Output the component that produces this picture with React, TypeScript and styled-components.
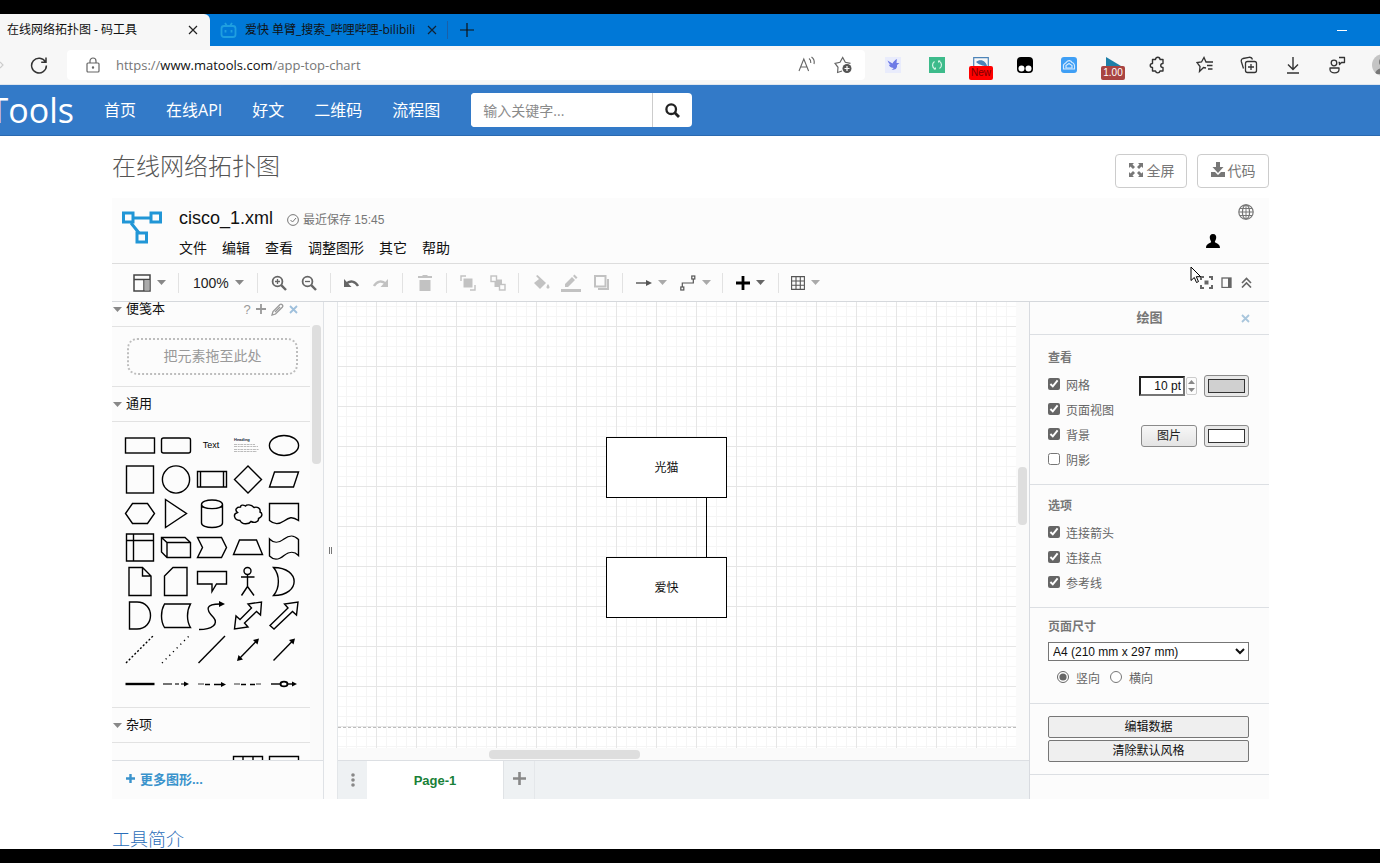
import React from "react";
import styled, { createGlobalStyle, css } from "styled-components";

const ui = `"Open Sans", "Noto Sans CJK SC", sans-serif`;
const arial = `"Liberation Sans", "Noto Sans CJK SC", sans-serif`;

const GlobalStyle = createGlobalStyle`
  *, *::before, *::after { box-sizing: border-box; }
  body { margin: 0; background: #000; font-family: ${ui}; color: #333; }
  button, input, select { font-family: inherit; margin: 0; }
  svg { display: block; flex: none; }
`;

const Screen = styled.div`
  display: flex;
  flex-direction: column;
  height: 100vh;
  padding: 14px 0;
  overflow: hidden;
  background: #000;
`;

/* ---------- browser chrome ---------- */

const TabStrip = styled.div`
  display: flex;
  align-items: center;
  flex: none;
  height: 32px;
  background: #0078d7;
  color: #111;
`;

const BrowserTab = styled.div<{ $active?: boolean }>`
  display: flex;
  align-items: center;
  gap: ${(p) => (p.$active ? "10px" : "8px")};
  height: 32px;
  padding: ${(p) => (p.$active ? "0 8px 0 7px" : "0 6px 0 10px")};
  width: ${(p) => (p.$active ? "210px" : "237px")};
  background: ${(p) => (p.$active ? "#f7f7f7" : "transparent")};
  border-radius: 0 6px 0 0;
`;

const TabTitle = styled.span`
  flex: 1;
  font-size: 12px;
  line-height: 18px;
  white-space: nowrap;
`;

const PlainButton = styled.button<{ $w?: number }>`
  display: flex;
  align-items: center;
  justify-content: center;
  flex: none;
  width: ${(p) => (p.$w ? `${p.$w}px` : "auto")};
  padding: 0;
  border: 0;
  background: none;
  color: inherit;
`;

const NewTab = styled(PlainButton)`
  height: 18px;
  border-left: 1px solid #1a5fa8;
`;

const Minimize = styled(PlainButton)`
  margin-left: auto;
  margin-right: 30px;
  color: #fff;
`;

const AddressRow = styled.div`
  display: flex;
  align-items: center;
  flex: none;
  height: 39px;
  background: #f7f7f7;
  border-bottom: 1px solid #dfe6ee;
  overflow: hidden;
  color: #333;
`;

const AddressBox = styled.div`
  display: flex;
  align-items: center;
  flex: 1;
  height: 30px;
  padding: 0 13px 0 19px;
  background: #fff;
  border-radius: 4px;
`;

const Url = styled.span`
  flex: 1;
  margin-left: 16px;
  font-size: 13px;
  line-height: 20px;
  color: #767676;
  b { font-weight: 400; color: #111; }
`;

const AddressActions = styled.div`
  display: flex;
  gap: 18px;
`;

const Extensions = styled.div`
  display: flex;
  align-items: center;
  flex: none;
  width: 515px;
  padding-left: 6px;
`;

const ExtensionSlot = styled(PlainButton)`
  position: relative;
  width: 44px;
  height: 30px;
`;

const ExtBadge = styled.span<{ $bg: string; $fg: string }>`
  position: absolute;
  left: 10px;
  top: 16px;
  width: 24px;
  height: 14px;
  border-radius: 2px;
  background: ${(p) => p.$bg};
  color: ${(p) => p.$fg};
  font: 10px/14px ${arial};
  text-align: center;
`;

const ExtDivider = styled.span`
  width: 1px;
  height: 18px;
  margin: 0 2px;
  background: #b5b5b5;
`;

const Avatar = styled(PlainButton)`
  width: 22px;
  height: 22px;
  margin-left: 13px;
  border-radius: 50%;
  background: #c4c4c4;
  overflow: hidden;
`;

/* ---------- site navigation ---------- */

const SiteNav = styled.nav`
  display: flex;
  align-items: center;
  flex: none;
  height: 51px;
  background: #337ac8;
  border-bottom: 1px solid #2a69b0;
`;

const Brand = styled.a`
  display: flex;
  justify-content: flex-end;
  width: 74px;
  overflow: hidden;
  font-size: 34px;
  line-height: 46px;
  color: #fff;
  text-decoration: none;
`;

const NavLinks = styled.div`
  display: flex;
  gap: 30px;
  margin: 0 31px 0 30px;
`;

const NavLink = styled.a`
  font-size: 16px;
  line-height: 24px;
  color: #fff;
  text-decoration: none;
  white-space: nowrap;
`;

const SearchForm = styled.form`
  display: flex;
  width: 221px;
  height: 34px;
  border-radius: 4px;
  background: #fff;
  overflow: hidden;
`;

const SearchInput = styled.input`
  flex: 1;
  min-width: 0;
  padding: 0 12px;
  border: 0;
  background: #fff;
  font-size: 14px;
  &::placeholder { color: #8a8a8a; }
`;

const SearchButton = styled(PlainButton)`
  width: 40px;
  border-left: 1px solid #ccc;
  color: #222;
`;

/* ---------- page ---------- */

const Page = styled.main`
  display: flex;
  flex-direction: column;
  flex: 1;
  min-height: 0;
  padding: 0 111px 0 112px;
  background: #fff;
  overflow: hidden;
`;

const PageHead = styled.header`
  display: flex;
  align-items: flex-start;
  gap: 10px;
  flex: none;
  height: 62px;
`;

const PageTitle = styled.h1`
  flex: 1;
  margin: 12px 0 0;
  font-size: 24px;
  line-height: 36px;
  font-weight: 300;
  color: #555;
`;

const OutlineButton = styled.button`
  display: flex;
  align-items: center;
  justify-content: center;
  gap: 3px;
  width: 72px;
  height: 34px;
  margin-top: 18px;
  padding: 0 0 2px;
  border: 1px solid #ccc;
  border-radius: 4px;
  background: #fff;
  color: #777;
  font-size: 14px;
`;

const Intro = styled.h2`
  flex: none;
  height: 50px;
  margin: 0;
  padding-top: 27px;
  font-size: 18px;
  line-height: 26px;
  font-weight: 300;
  color: #2a6db8;
`;

/* ---------- editor shell ---------- */

const Editor = styled.section`
  display: flex;
  flex-direction: column;
  flex: 1;
  min-height: 0;
  background: #fcfcfc;
  font-family: ${arial};
  color: #111;
`;

const EditorHead = styled.div`
  display: flex;
  flex: none;
  height: 65px;
  padding: 0 15px 0 10px;
`;

const LogoSlot = styled.div`
  width: 57px;
  padding-top: 12px;
`;

const FileInfo = styled.div`
  display: flex;
  flex-direction: column;
  flex: 1;
  padding-top: 9px;
  gap: 9px;
`;

const FileLine = styled.div`
  display: flex;
  align-items: center;
  gap: 14px;
`;

const FileName = styled.span`
  font-size: 18px;
  line-height: 22px;
`;

const SavedNote = styled.span`
  display: flex;
  align-items: center;
  gap: 4px;
  padding-top: 4px;
  font-size: 12px;
  line-height: 18px;
  color: #777;
`;

const MenuBar = styled.div`
  display: flex;
  gap: 15px;
`;

const MenuItem = styled(PlainButton)`
  font-size: 14px;
  line-height: 20px;
`;

const HeadCorner = styled.div`
  display: flex;
  flex-direction: column;
  align-items: flex-end;
  gap: 14px;
  padding-top: 6px;
`;

const UserButton = styled(PlainButton)`
  margin-right: 34px;
`;

const ToolRow = styled.div`
  display: flex;
  align-items: center;
  flex: none;
  height: 39px;
  border-top: 1px solid #ddd;
  border-bottom: 1px solid #d5d8dc;
  color: #666;
`;

const ToolGroup = styled.div<{ $w: number; $pad: number; $gap?: number; $last?: boolean }>`
  display: flex;
  align-items: center;
  gap: ${(p) => p.$gap ?? 0}px;
  width: ${(p) => p.$w}px;
  height: 20px;
  padding-left: ${(p) => p.$pad}px;
  border-right: ${(p) => (p.$last ? "0" : "1px solid #e2e2e2")};
`;

const ToolButton = styled(PlainButton)<{ $off?: boolean }>`
  width: 30px;
  height: 24px;
  color: ${(p) => (p.$off ? "#c2c2c2" : "#666")};
`;

const DropButton = styled(PlainButton)`
  gap: 6px;
  height: 24px;
  font-size: 14px;
  color: #555;
`;

const ZoomText = styled.span`
  color: #222;
`;

const RightTools = styled.div`
  position: relative;
  display: flex;
  margin-left: auto;
  padding-right: 13px;
`;

const Pointer = styled.svg`
  position: absolute;
  left: -6px;
  top: -10px;
`;

const Workspace = styled.div`
  display: flex;
  flex: 1;
  min-height: 0;
`;

/* ---------- shape palette ---------- */

const Sidebar = styled.aside`
  display: flex;
  flex-direction: column;
  flex: none;
  width: 212px;
  border-right: 1px solid #dfe2e6;
`;

const PaletteArea = styled.div`
  display: flex;
  flex: 1;
  min-height: 0;
  overflow: hidden;
`;

const PaletteList = styled.div`
  width: 198px;
  margin-top: -10px;
`;

const PaletteTitle = styled.div`
  display: flex;
  align-items: center;
  gap: 4px;
  height: 35px;
  padding: 0 11px 0 1px;
  border-bottom: 1px solid #e2e2e2;
  font-size: 13px;
  line-height: 20px;
`;

const PaletteActions = styled.div`
  display: flex;
  gap: 3px;
  margin-left: auto;
  color: #999;
`;

const Help = styled(PlainButton)`
  font-size: 13px;
  width: 10px;
`;

const DropZoneWrap = styled.div`
  padding: 11px 12px 11px 15px;
  border-bottom: 1px solid #e2e2e2;
`;

const DropZone = styled.div`
  height: 37px;
  border: 2px dotted #bdbdbd;
  border-radius: 10px;
  text-align: center;
  font-size: 14px;
  line-height: 33px;
  color: #999;
`;

const ShapeGrid = styled.div`
  display: grid;
  grid-template-columns: repeat(5, 36px);
  grid-auto-rows: 34px;
  padding: 6px 0 7px 10px;
  border-bottom: 1px solid #e2e2e2;
`;

const ScrollRail = styled.div<{ $side?: "v" | "h" }>`
  flex: none;
  background: #fafafa;
  ${(p) =>
    p.$side === "h"
      ? css`height: 12px; padding: 2px 0 1px 151px;`
      : css`width: 13px; padding: 0 2px;`}
`;

const Thumb = styled.div<{ $top?: string; $w?: string; $h?: string }>`
  width: ${(p) => p.$w ?? "9px"};
  height: ${(p) => p.$h ?? "9px"};
  margin-top: ${(p) => p.$top ?? "0"};
  border-radius: 4px;
  background: #dedede;
`;

const MoreShapes = styled(PlainButton)`
  justify-content: flex-start;
  gap: 5px;
  height: 39px;
  padding: 0 0 3px 14px;
  border-top: 1px solid #dcdfe3;
  font-size: 13px;
  font-weight: 700;
  color: #3a93cc;
`;

const Splitter = styled.div`
  display: flex;
  align-items: center;
  justify-content: center;
  flex: none;
  width: 14px;
  border-right: 1px solid #e3e6e9;
`;

const Grip = styled.div`
  width: 3px;
  height: 7px;
  border: solid #777;
  border-width: 0 1px;
`;

/* ---------- canvas ---------- */

const Center = styled.div`
  display: flex;
  flex-direction: column;
  flex: 1;
  min-width: 0;
`;

const CanvasRow = styled.div`
  display: flex;
  flex: 1;
  min-height: 0;
`;

const Canvas = styled.div`
  position: relative;
  flex: 1;
  overflow: hidden;
  background-color: #fff;
  background-image:
    linear-gradient(to right, #e6e6e6 1px, transparent 1px),
    linear-gradient(to bottom, #e6e6e6 1px, transparent 1px),
    linear-gradient(to right, #f5f5f5 1px, transparent 1px),
    linear-gradient(to bottom, #f5f5f5 1px, transparent 1px);
  background-size: 40px 40px, 40px 40px, 10px 10px, 10px 10px;
  background-position: 38px 24px, 38px 24px, 8px 4px, 8px 4px;
`;

const Node = styled.div<{ $x: number; $y: number }>`
  position: absolute;
  left: ${(p) => p.$x}px;
  top: ${(p) => p.$y}px;
  width: 121px;
  height: 61px;
  border: 1px solid #000;
  background: #fff;
  text-align: center;
  font-size: 12px;
  line-height: 60px;
`;

const Edge = styled.div`
  position: absolute;
  left: 368px;
  top: 195px;
  width: 1px;
  height: 61px;
  background: #000;
`;

const PageBreak = styled.div`
  position: absolute;
  left: 0;
  right: 0;
  top: 425px;
  border-top: 1px dashed #bdbdbd;
`;

const PageTabs = styled.div`
  display: flex;
  flex: none;
  height: 39px;
  border-top: 1px solid #dcdfe3;
  background: #eef1f3;
  color: #888;
`;

const PageTab = styled.button`
  width: 137px;
  padding: 0;
  border: 0;
  border-right: 1px solid #e0e3e6;
  background: #fff;
  font-size: 13px;
  font-weight: 700;
  color: #188038;
`;

const AddPage = styled(PlainButton)`
  padding-bottom: 4px;
  border-right: 1px solid #e4e7ea;
`;

/* ---------- format panel ---------- */

const Panel = styled.aside`
  flex: none;
  width: 240px;
  border-left: 1px solid #d8dbe0;
  font-size: 12px;
  color: #666;
`;

const PanelTitle = styled.div`
  display: flex;
  align-items: center;
  height: 33px;
  padding: 0 18px 0 30px;
  border-bottom: 1px solid #dcdfe3;
  font-size: 13px;
  line-height: 18px;
  font-weight: 700;
  color: #777;
  span { flex: 1; text-align: center; }
`;

const PanelSection = styled.section<{ $top: number; $bottom: number }>`
  padding: ${(p) => p.$top}px 20px ${(p) => p.$bottom}px 18px;
  border-bottom: 1px solid #dcdfe3;
`;

const PanelHeading = styled.h3`
  margin: 0 0 4px;
  font-size: 12px;
  line-height: 22px;
  font-weight: 700;
  color: #777;
`;

const OptionRow = styled.div`
  display: flex;
  align-items: center;
  height: 25px;
`;

const Option = styled.label`
  display: flex;
  align-items: center;
  gap: 6px;
  flex: 1;
  line-height: 18px;
  input {
    width: 12px;
    height: 12px;
    margin: 0 0 4px;
    accent-color: #666;
  }
`;

const SizeInput = styled.input`
  width: 46px;
  height: 20px;
  padding: 0 2px;
  border: 2px inset #767676;
  font-size: 12px;
  text-align: right;
  color: #111;
`;

const Stepper = styled.div`
  display: flex;
  flex-direction: column;
  width: 11px;
  height: 18px;
  margin: 0 7px 0 1px;
  border: 1px solid #ccc;
  border-radius: 2px;
  button { flex: 1; width: 9px; }
  color: #888;
`;

const SwatchButton = styled.button<{ $color: string }>`
  width: 45px;
  height: 22px;
  padding: 3px;
  border: 1px solid #8a8a8a;
  border-radius: 3px;
  background: #e8e8e8;
  &::before {
    content: "";
    display: block;
    height: 14px;
    border: 1px solid #333;
    background: ${(p) => p.$color};
  }
`;

const ImageButton = styled.button`
  width: 56px;
  height: 22px;
  margin-right: 7px;
  padding: 0;
  border: 1px solid #8a8a8a;
  border-radius: 3px;
  background: linear-gradient(#f7f7f7, #e4e4e4);
  font-size: 12px;
  line-height: 18px;
  color: #222;
`;

const PaperSelect = styled.select`
  display: block;
  width: 100%;
  height: 19px;
  padding: 0;
  border: 1px solid #767676;
  border-radius: 0;
  background: #fff;
  font-size: 12px;
  color: #111;
`;

const RadioRow = styled.div`
  display: flex;
  align-items: center;
  gap: 10px;
  height: 25px;
  margin-top: 5px;
  padding-left: 9px;
  label { flex: none; gap: 7px; }
`;

const WideButton = styled.button`
  display: block;
  width: 100%;
  height: 22px;
  padding: 0;
  border: 1px solid #767676;
  border-radius: 2px;
  background: #efefef;
  font-size: 12px;
  line-height: 20px;
  color: #111;
  & + & { margin-top: 2px; }
`;

/* ---------- icons ---------- */

type SvgProps = React.SVGProps<SVGSVGElement>;

const Line = ({ w = 16, h, children, ...rest }: SvgProps & { w?: number; h?: number }) => (
  <svg width={w} height={h ?? w} viewBox={`0 0 ${w} ${h ?? w}`} fill="none" stroke="currentColor" strokeWidth="1.2" {...rest}>
    {children}
  </svg>
);

const Cross = ({ w = 10, color = "currentColor", sw = 1.2 }: { w?: number; color?: string; sw?: number }) => (
  <Line w={w} stroke={color} strokeWidth={sw}><path d={`M1 1L${w - 1} ${w - 1}M${w - 1} 1L1 ${w - 1}`} /></Line>
);

const PlusIcon = ({ w = 14, sw = 2 }: { w?: number; sw?: number }) => (
  <Line w={w} strokeWidth={sw}><path d={`M${w / 2} 0V${w}M0 ${w / 2}H${w}`} /></Line>
);

const Caret = ({ color = "#888" }: { color?: string }) => (
  <svg width="9" height="5" viewBox="0 0 9 5"><path d="M0 0H9L4.5 5Z" fill={color} /></svg>
);

const Magnifier = ({ plus }: { plus?: boolean }) => (
  <Line w={16} strokeWidth="1.8">
    <circle cx="6.5" cy="6.5" r="4.9" />
    <path d="M10.2 10.2L15 15" strokeWidth="2.4" />
    <path d={plus ? "M4 6.5H9M6.5 4V9" : "M4 6.5H9"} strokeWidth="1.3" />
  </Line>
);

const Globe = () => (
  <Line w={16} stroke="#777" strokeWidth="1.2">
    <circle cx="8" cy="8" r="7.2" />
    <ellipse cx="8" cy="8" rx="3.6" ry="7.2" />
    <path d="M8 1V15M1 8H15M2 4.5H14M2 11.5H14" strokeWidth="1" />
  </Line>
);

/* Palette drawings, each in a 36 by 34 cell. */
const shapes: React.ReactNode[] = [
  <rect x="3.5" y="10" width="29" height="15" />,
  <rect x="3.5" y="10" width="29" height="15" rx="2" />,
  <text x="17" y="20" fontSize="9" textAnchor="middle" fill="#000" stroke="none">Text</text>,
  <>
    <text x="4" y="13" fontSize="4" fontWeight="700" fill="#123" stroke="none">Heading</text>
    <path d="M4 16.5H25M4 18.5H28M4 21.5H29M4 23.5H27" stroke="#bbb" strokeWidth="1" strokeDasharray="3 .7 2 .6" />
  </>,
  <ellipse cx="18" cy="17.5" rx="14.6" ry="10" />,

  <rect x="4.5" y="4" width="27" height="27" />,
  <circle cx="18" cy="17.5" r="13.6" />,
  <path d="M3.5 9.5H32.5V25H3.5ZM6.5 9.5V25M29.5 9.5V25" />,
  <path d="M18 4L31.5 17.5L18 31L4.5 17.5Z" />,
  <path d="M8.5 10H32.5L27.5 25H3.5Z" />,

  <path d="M10.5 7.5H25.5L32.5 17.5L25.5 27.5H10.5L3.5 17.5Z" />,
  <path d="M7.5 3.5L28.5 17.5L7.5 31.5Z" />,
  <path d="M7.5 8.5V27C7.5 33 28.5 33 28.5 27V8.5M7.5 8.5C7.5 2.5 28.5 2.5 28.5 8.5C28.5 14 7.5 14 7.5 8.5" />,
  <path d="M10.500 11C6 11 4.500 14 7.500 16.500C2.500 18 4 24 10 24.500C12 29 19 28.500 21 25.500C25 27.500 29 25.500 28.500 22.500C33 20.500 32.500 17 30 16C31 12 27 10.500 24 11.500C21 8 16.500 8.500 15.500 10C13 8.500 10.500 9 10.500 11Z" />,
  <path d="M3.5 7.5H32.5V24.5C26 20 23 21.5 18 25C13 28.5 8 28.5 3.5 24.5Z" />,

  <path d="M4.5 4H31.5V31H4.5ZM11.5 4V31M4.5 10.5H31.5" />,
  <path d="M3.5 7.5H27L32.5 12.5V27.5H9L3.5 22ZM3.5 7.5L9 12.5H32.5M9 12.5V27.5" />,
  <path d="M3.5 7.5H27.5L32.5 17.5L27.5 27.5H3.5L8.5 17.5Z" />,
  <path d="M9.5 10H26.5L32.5 24.5H3.5Z" />,
  <path d="M3.5 9C8 13.500 12 13.500 18 9C24 4.500 28 5 32.5 9.500V25.500C28 21 24 21 18 25.500C12 30.500 8 30.500 3.5 26Z" />,

  <path d="M7 3.5H20.5L29 12V31.5H7ZM20.5 3.5V12H29" />,
  <path d="M15 3.5H29V31.5H6.5V12Z" />,
  <path d="M3.5 7.5H32.5V20H22.5L18 27.5V20H3.5Z" />,
  <path d="M17.5 10.5V22.5M11 13H24.5M17.5 22.5L11.5 31.5M17.5 22.5L24 31.5M21 7A3.5 3.5 0 1 1 14 7A3.5 3.5 0 1 1 21 7" />,
  <path d="M7.5 3.5C35 3.5 35 31.500 7.5 31.500C14 24 14 11 7.500 3.500Z" />,

  <path d="M7.5 4H15C33 4 33 31 15 31H7.5Z" />,
  <path d="M6.5 6H32.5C28.5 13 28.5 23 32.5 29.5H6.5C2.5 23 2.5 13 6.5 6Z" />,
  <>
    <path d="M5 31.5C18 31.5 25 26 19.5 19.5C11 11 12 6 26 6" />
    <path d="M25 3L31 6L25 9Z" fill="#000" stroke="none" />
  </>,
  <path d="M31.5 4L30.5 17L26.5 13.5L14.5 25L18 29L4.5 31L6 18L10 21.5L21.5 10L18 6Z" />,
  <path d="M32 4L30.5 17L26.5 13.5L8 31L4 27.5L22 10L18.5 6Z" />,

  <path d="M4 31L31 4" strokeDasharray="2 2" />,
  <path d="M4 31L31 4" strokeDasharray="1.2 4" />,
  <path d="M4.5 31L31 4" />,
  <>
    <path d="M9 27L27 8.5" />
    <path d="M7 29L8.5 23L13 27.5ZM29 6.5L27.5 12.5L23 8Z" fill="#000" stroke="none" />
  </>,
  <>
    <path d="M7.5 28.5L27 8.5" />
    <path d="M29 6.5L27.5 12.5L23 8Z" fill="#000" stroke="none" />
  </>,

  <path d="M3.5 18H32.5" strokeWidth="2.4" />,
  <>
    <path d="M5 18H28" strokeDasharray="9 3 4 2" stroke="#444" />
    <path d="M26 15.5L31 18L26 20.5Z" fill="#000" stroke="none" />
  </>,
  <>
    <path d="M4 18H10" stroke="#999" strokeWidth="2" />
    <path d="M11 18.5H28" strokeDasharray="5 4 8 2" />
    <path d="M27 16L32 18.5L27 21Z" fill="#000" stroke="none" />
  </>,
  <>
    <path d="M4 18H10M26 18H31" stroke="#999" strokeWidth="2" />
    <path d="M11 18.5H25" strokeDasharray="5 4 8 2" />
  </>,
  <>
    <path d="M5 18H28" />
    <ellipse cx="18" cy="18" rx="3.5" ry="2.4" strokeWidth="1.8" fill="#fcfcfc" />
    <path d="M26 15.5L31 18L26 20.5Z" fill="#000" stroke="none" />
  </>,
];

const tableShapes: React.ReactNode[] = [
  null,
  null,
  null,
  <path d="M3.5 28V7.5H32.5V28M13 7.5V28M23 7.5V28M3.5 14H32.5" />,
  <path d="M3.5 28V7.5H32.5V28M3.5 14H32.5" />,
];

const Shape = ({ children }: { children: React.ReactNode }) => (
  <svg width="36" height="34" viewBox="0 0 36 34" fill="none" stroke="#000" strokeWidth="1.4">{children}</svg>
);

/* ---------- sections ---------- */

const BrowserChrome = () => (
  <>
    <TabStrip>
      <BrowserTab $active>
        <TabTitle>在线网络拓扑图 - 码工具</TabTitle>
        <PlainButton $w={18} aria-label="关闭标签页"><Cross w={10} color="#222" /></PlainButton>
      </BrowserTab>
      <BrowserTab>
        <Line w={17} stroke="#1f9fe0" strokeWidth="1.8">
          <rect x="1.5" y="4" width="14" height="11" rx="2.5" />
          <path d="M5 1L7 4M12 1L10 4M5.5 8V10.5M11.5 8V10.5" />
        </Line>
        <TabTitle>爱快 单臂_搜索_哔哩哔哩-bilibili</TabTitle>
        <PlainButton $w={18} aria-label="关闭标签页"><Cross w={10} color="#123" /></PlainButton>
      </BrowserTab>
      <NewTab $w={38} aria-label="新建标签页"><PlusIcon w={14} sw={1.2} /></NewTab>
      <Minimize $w={16} aria-label="最小化"><Line w={10} h={1} strokeWidth="1"><path d="M0 .5H10" /></Line></Minimize>
    </TabStrip>
    <AddressRow>
      <PlainButton $w={10} aria-label="前进">
        <Line w={10} h={12} stroke="#ccc"><path d="M0 3L3 6L0 9" /></Line>
      </PlainButton>
      <PlainButton $w={57} aria-label="刷新">
        <Line w={18} strokeWidth="1.5"><path d="M15.5 6A7.4 7.4 0 1 0 16.4 9.5M16 1.5V6.2H11.2" /></Line>
      </PlainButton>
      <AddressBox>
        <Line w={14} h={16} stroke="#666">
          <rect x="1" y="6" width="12" height="9" rx="1" />
          <path d="M4 6V4A3 3 0 0 1 10 4V6" />
          <circle cx="7" cy="10.5" r=".6" />
        </Line>
        <Url>https://<b>www.matools.com</b>/app-top-chart</Url>
        <AddressActions>
          <PlainButton $w={18} aria-label="朗读">
            <Line w={18} stroke="#666"><path d="M1 15L5.8 3L10.6 15M2.8 11H8.9M11 2.5C12.5 3.5 13 5 12.8 7M13.5 1C16 2.8 16.6 5.5 16 8" strokeWidth="1.1" /></Line>
          </PlainButton>
          <PlainButton $w={18} aria-label="收藏">
            <Line w={18} stroke="#666">
              <path d="M8 15L3.6 16.5L4 11.3L1 7.3L6 6.3L8.7 1.5L11.3 6.3L16.5 7.3" />
              <circle cx="13" cy="12.5" r="4.5" fill="#555" stroke="none" />
              <path d="M10.5 12.5H15.5M13 10V15" stroke="#fff" />
            </Line>
          </PlainButton>
        </AddressActions>
      </AddressBox>
      <Extensions>
        <ExtensionSlot aria-label="翻译">
          <Line w={16} stroke="none">
            <rect width="16" height="16" fill="#e9ecfc" />
            <path d="M2.5 3.5L7.5 6.500C8.500 4.500 10 3 12 2C11.500 4 11.800 5 11.500 6L14.500 6L12 8C12.500 11 10.500 13.500 6.500 12.500C8 12 8.500 11.500 8.500 11C5.500 10.500 4 9 3.800 7.500L5.500 8C4 6.500 3 5 2.500 3.500Z" fill="#6d7ae6" />
          </Line>
        </ExtensionSlot>
        <ExtensionSlot aria-label="同步">
          <Line w={16} stroke="none">
            <rect width="16" height="16" fill="#3dbb8b" />
            <path d="M5.5 4.5A4.3 4.3 0 0 0 6 12M10.5 11.5A4.3 4.3 0 0 0 10 4" stroke="#d6f5e6" strokeWidth="1.2" />
            <path d="M4.5 12.5H7V10ZM11.500 3.500H9V6Z" fill="#d6f5e6" />
          </Line>
        </ExtensionSlot>
        <ExtensionSlot aria-label="截图">
          <Line w={16} stroke="#4d84b8" strokeWidth="1.2"><path d="M.7 15V.7H15.3V15" /><path d="M3 5C7 1.500 13.500 3 14.500 11C12 8 7 9 3 5Z" fill="#4d84b8" stroke="none" /></Line>
          <ExtBadge $bg="#f00" $fg="#7a0000">New</ExtBadge>
        </ExtensionSlot>
        <ExtensionSlot aria-label="脚本">
          <Line w={16} h={18} stroke="none">
            <rect y="1" width="16" height="16" rx="4" fill="#000" />
            <circle cx="4.5" cy="12.5" r="3" fill="#fff" />
            <circle cx="11.5" cy="12.5" r="3" fill="#fff" />
          </Line>
        </ExtensionSlot>
        <ExtensionSlot aria-label="网盘">
          <Line w={16} stroke="none">
            <rect width="16" height="16" rx="3" fill="#3f9ff5" />
            <path d="M2.5 12V8C3.5 6 5 6.5 5.5 5C7 3 10 3 11 5.5C13 6 14 8 13.5 12Z" fill="none" stroke="#d4eaff" />
            <path d="M5 11V8.500L8 6.500L11 8.500V11Z" stroke="#d4eaff" />
          </Line>
        </ExtensionSlot>
        <ExtensionSlot aria-label="倍速">
          <Line w={16} stroke="none"><path d="M1 0L16 9L16 12H1Z" fill="#1d7fa8" /></Line>
          <ExtBadge $bg="#a94442" $fg="#fff">1.00</ExtBadge>
        </ExtensionSlot>
        <ExtensionSlot aria-label="扩展">
          <Line w={18} strokeWidth="1.4">
            <path d="M4.500 3.500H7.500C7.500 .5 12 .5 12 3.500H15V7.500C12 7.500 12 11.500 15 11.500V15H12C11.500 17.500 8 17.500 7.500 15H4.500V11.500C1.500 11.500 1.500 7.500 4.500 7.500Z" strokeLinejoin="round" />
          </Line>
        </ExtensionSlot>
        <ExtDivider />
        <ExtensionSlot aria-label="收藏夹">
          <Line w={18} strokeWidth="1.3"><path d="M10 12L7.5 11.5L3.5 15.5L4 10.5L1 6.5L5.5 6L8 1.5L10 6H17M11 9.5H16.5M12 13H16.5" /></Line>
        </ExtensionSlot>
        <ExtensionSlot aria-label="集锦">
          <Line w={18} strokeWidth="1.3"><rect x="5.5" y="5.5" width="11" height="11" rx="2" /><path d="M11 8V14M8 11H14M3.5 12.5L1.3 5.5C1 4 1.5 3 3 2.5L9 1.3C11 1 12 1.5 12.5 3.5" /></Line>
        </ExtensionSlot>
        <ExtensionSlot aria-label="下载">
          <Line w={16} h={18} strokeWidth="1.4"><path d="M8 1V13M3 8.500L8 13.500L13 8.500M2 17H14" /></Line>
        </ExtensionSlot>
        <ExtensionSlot aria-label="分享">
          <Line w={18} strokeWidth="1.3"><circle cx="6" cy="7" r="2.8" /><path d="M2 12H11V13.5C11 18 2 18 2 13.5ZM11 1.5H16.5V6.5H13.5L11.5 8.5V6.5H10.5" strokeLinejoin="round" /></Line>
        </ExtensionSlot>
        <Avatar aria-label="个人资料">
          <Line w={22} stroke="none"><circle cx="11" cy="8" r="4" fill="#777" /><path d="M3 20C4 12 18 12 19 20Z" fill="#777" /></Line>
        </Avatar>
      </Extensions>
    </AddressRow>
  </>
);

const SiteHeader = () => (
  <SiteNav>
    <Brand href="#">Tools</Brand>
    <NavLinks>
      {["首页", "在线API", "好文", "二维码", "流程图"].map((t) => (
        <NavLink href="#" key={t}>{t}</NavLink>
      ))}
    </NavLinks>
    <SearchForm onSubmit={(e) => e.preventDefault()}>
      <SearchInput placeholder="输入关键字..." aria-label="搜索" />
      <SearchButton type="submit" aria-label="搜索">
        <Line w={15} strokeWidth="2.3"><circle cx="6.2" cy="6.2" r="4.8" /><path d="M9.8 9.8L14 14" strokeWidth="2.8" /></Line>
      </SearchButton>
    </SearchForm>
  </SiteNav>
);

const Toolbar = () => (
  <ToolRow>
    <ToolGroup $w={67} $pad={21}>
      <DropButton aria-label="视图">
        <Line w={18} stroke="#444" strokeWidth="1.5"><path d="M1 1H17V17H1ZM1 5.5H17M11 5.5V17" /><rect x="11.5" y="6" width="5" height="10.5" fill="#aaa" stroke="none" /></Line>
        <Caret />
      </DropButton>
    </ToolGroup>
    <ToolGroup $w={79} $pad={14}>
      <DropButton aria-label="缩放"><ZoomText>100%</ZoomText><Caret /></DropButton>
    </ToolGroup>
    <ToolGroup $w={73} $pad={6}>
      <ToolButton aria-label="放大"><Magnifier plus /></ToolButton>
      <ToolButton aria-label="缩小"><Magnifier /></ToolButton>
    </ToolGroup>
    <ToolGroup $w={72} $pad={5}>
      <ToolButton aria-label="撤销">
        <Line w={16} h={10}><path d="M15 8C12 3 7 2 3 6" strokeWidth="2.4" /><path d="M1 1V9H8.5Z" fill="currentColor" stroke="none" /></Line>
      </ToolButton>
      <ToolButton $off aria-label="重做">
        <Line w={16} h={10}><path d="M1 8C4 3 9 2 13 6" strokeWidth="2.4" /><path d="M15 1V9H7.5Z" fill="currentColor" stroke="none" /></Line>
      </ToolButton>
    </ToolGroup>
    <ToolGroup $w={44} $pad={7}>
      <ToolButton $off aria-label="删除">
        <Line w={14} h={16} stroke="none" fill="currentColor"><path d="M0 1H4L5 0H9L10 1H14V3H0ZM1.5 5H12.5V16H1.5Z" /></Line>
      </ToolButton>
    </ToolGroup>
    <ToolGroup $w={72} $pad={6}>
      <ToolButton $off aria-label="移至最前">
        <Line w={16}><path d="M1 6V1H6M15 10V15H10" strokeWidth="1.4" /><rect x="3.5" y="3.5" width="9" height="9" fill="currentColor" stroke="none" /></Line>
      </ToolButton>
      <ToolButton $off aria-label="移至最后">
        <Line w={16} strokeWidth="1.4"><rect x="4.5" y="4.5" width="7.5" height="7.5" fill="currentColor" stroke="none" /><rect x="1" y="1" width="5.500" height="5.500" fill="#fcfcfc" /><rect x="9.500" y="9.500" width="5.500" height="5.500" fill="#fcfcfc" /></Line>
      </ToolButton>
    </ToolGroup>
    <ToolGroup $w={104} $pad={7}>
      <ToolButton $off aria-label="填充颜色">
        <Line w={17} h={16} stroke="none" fill="currentColor"><path d="M3 1L4.5 0L13 8L7 14L1 8L6 4ZM15 9C17.5 12.5 16.5 13.5 15 13.5C13.5 13.5 12.5 12.5 15 9Z" /></Line>
      </ToolButton>
      <ToolButton $off aria-label="线条颜色">
        <Line w={20} h={18} stroke="none" fill="currentColor"><path d="M4 13V10L11 3L14 6L7 13ZM12 2L13.5 .5L16.5 3.5L15 5ZM0 15H20V18H0Z" /></Line>
      </ToolButton>
      <ToolButton $off aria-label="阴影">
        <Line w={15}><path d="M14 4V14H4" strokeWidth="2" /><rect x="1" y="1" width="10.5" height="10.5" strokeWidth="2" /></Line>
      </ToolButton>
    </ToolGroup>
    <ToolGroup $w={100} $pad={13} $gap={13}>
      <DropButton aria-label="连接线">
        <Line w={16} h={8}><path d="M0 4H12" strokeWidth="1.4" /><path d="M10 1L16 4L10 7Z" fill="currentColor" stroke="none" /></Line>
        <Caret color="#aaa" />
      </DropButton>
      <DropButton aria-label="航点">
        <Line w={16} strokeWidth="1.2"><rect x=".8" y="12" width="3" height="3" /><rect x="11.8" y="1" width="3" height="3" /><path d="M2.3 12V8H13.3V4" /></Line>
        <Caret color="#aaa" />
      </DropButton>
    </ToolGroup>
    <ToolGroup $w={56} $pad={13}>
      <DropButton aria-label="插入">
        <Line w={14} stroke="#000" strokeWidth="2.8"><path d="M7 0V14M0 7H14" /></Line>
        <Caret color="#666" />
      </DropButton>
    </ToolGroup>
    <ToolGroup $w={57} $pad={12} $last>
      <DropButton aria-label="表格">
        <Line w={14} strokeWidth="1.1"><path d="M.6 .6H13.4V13.4H.6ZM5 .6V13.4M9.3 .6V13.4M.6 5H13.4M.6 9.3H13.4" /></Line>
        <Caret color="#aaa" />
      </DropButton>
    </ToolGroup>
    <RightTools>
      <PlainButton $w={20} aria-label="全屏">
        <Line w={13} strokeWidth="2"><path d="M1 4V1H4M9 1H12V4M12 9V12H9M4 12H1V9" /><rect x="4.5" y="4.5" width="4" height="4" fill="currentColor" stroke="none" /></Line>
      </PlainButton>
      <PlainButton $w={20} aria-label="格式">
        <Line w={11}><rect x="1" y="1" width="9" height="9.5" strokeWidth="1.3" /><rect x="7" y="1" width="3" height="9.5" fill="currentColor" stroke="none" /></Line>
      </PlainButton>
      <PlainButton $w={20} aria-label="收起">
        <Line w={11} strokeWidth="1.6"><path d="M1 6L5.5 1.5L10 6M1 10.5L5.5 6L10 10.5" /></Line>
      </PlainButton>
      <Pointer width="12" height="18" viewBox="0 0 12 18" fill="#fff" stroke="#000">
        <path d="M1 1V14.5L4.3 11.5L6.5 16.5L8.5 15.6L6.3 10.7H10.7Z" />
      </Pointer>
    </RightTools>
  </ToolRow>
);

const Palette = () => (
  <Sidebar>
    <PaletteArea>
      <PaletteList>
        <PaletteTitle>
          <Caret />
          <span>便笺本</span>
          <PaletteActions>
            <Help aria-label="帮助">?</Help>
            <PlainButton $w={12} aria-label="添加"><PlusIcon w={10} sw={1.8} /></PlainButton>
            <PlainButton $w={15} aria-label="编辑">
              <Line w={13} strokeWidth="1.3"><path d="M1 12L2 8.500L9 1.500C10.500 .5 12.500 2.500 11.500 4L4.500 11ZM4 9L9 4" /></Line>
            </PlainButton>
            <PlainButton $w={11} aria-label="关闭"><Cross w={9} color="#9fc0dc" sw={1.8} /></PlainButton>
          </PaletteActions>
        </PaletteTitle>
        <DropZoneWrap><DropZone>把元素拖至此处</DropZone></DropZoneWrap>
        <PaletteTitle><Caret /><span>通用</span></PaletteTitle>
        <ShapeGrid>{shapes.map((s, i) => <Shape key={i}>{s}</Shape>)}</ShapeGrid>
        <PaletteTitle><Caret /><span>杂项</span></PaletteTitle>
        <ShapeGrid>{tableShapes.map((s, i) => <Shape key={i}>{s}</Shape>)}</ShapeGrid>
      </PaletteList>
      <ScrollRail><Thumb $top="23px" $h="139px" /></ScrollRail>
    </PaletteArea>
    <MoreShapes><PlusIcon w={9} sw={2.4} />更多图形...</MoreShapes>
  </Sidebar>
);

const Drawing = () => (
  <Center>
    <CanvasRow>
      <Canvas>
        <PageBreak />
        <Edge />
        <Node $x={268} $y={135}>光猫</Node>
        <Node $x={268} $y={255}>爱快</Node>
      </Canvas>
      <ScrollRail><Thumb $top="165px" $h="58px" /></ScrollRail>
    </CanvasRow>
    <ScrollRail $side="h"><Thumb $w="151px" /></ScrollRail>
    <PageTabs>
      <PlainButton $w={29} aria-label="页面菜单">
        <Line w={4} h={14} stroke="none" fill="currentColor"><circle cx="2" cy="2" r="1.8" /><circle cx="2" cy="7" r="1.8" /><circle cx="2" cy="12" r="1.8" /></Line>
      </PlainButton>
      <PageTab>Page-1</PageTab>
      <AddPage $w={31} aria-label="添加页面"><PlusIcon w={13} sw={2.6} /></AddPage>
    </PageTabs>
  </Center>
);

const Check = ({ text, on = true }: { text: string; on?: boolean }) => (
  <Option><input type="checkbox" defaultChecked={on} />{text}</Option>
);

const FormatPanel = () => (
  <Panel>
    <PanelTitle>
      <span>绘图</span>
      <PlainButton $w={12} aria-label="关闭"><Cross w={9} color="#a9c6dc" sw={1.8} /></PlainButton>
    </PanelTitle>
    <PanelSection $top={12} $bottom={11}>
      <PanelHeading>查看</PanelHeading>
      <OptionRow>
        <Check text="网格" />
        <SizeInput defaultValue="10 pt" aria-label="网格大小" />
        <Stepper>
          <PlainButton aria-label="增大"><Line w={7} h={4} stroke="none" fill="currentColor"><path d="M0 4L3.5 0L7 4Z" /></Line></PlainButton>
          <PlainButton aria-label="减小"><Line w={7} h={4} stroke="none" fill="currentColor"><path d="M0 0L3.5 4L7 0Z" /></Line></PlainButton>
        </Stepper>
        <SwatchButton $color="#d0d0d0" aria-label="网格颜色" />
      </OptionRow>
      <OptionRow><Check text="页面视图" /></OptionRow>
      <OptionRow>
        <Check text="背景" />
        <ImageButton>图片</ImageButton>
        <SwatchButton $color="#fff" aria-label="背景颜色" />
      </OptionRow>
      <OptionRow><Check text="阴影" on={false} /></OptionRow>
    </PanelSection>
    <PanelSection $top={10} $bottom={11}>
      <PanelHeading>选项</PanelHeading>
      <OptionRow><Check text="连接箭头" /></OptionRow>
      <OptionRow><Check text="连接点" /></OptionRow>
      <OptionRow><Check text="参考线" /></OptionRow>
    </PanelSection>
    <PanelSection $top={8} $bottom={12}>
      <PanelHeading>页面尺寸</PanelHeading>
      <PaperSelect aria-label="页面尺寸"><option>A4 (210 mm x 297 mm)</option></PaperSelect>
      <RadioRow>
        <Option><input type="radio" name="orientation" defaultChecked />竖向</Option>
        <Option><input type="radio" name="orientation" />横向</Option>
      </RadioRow>
    </PanelSection>
    <PanelSection $top={12} $bottom={12}>
      <WideButton>编辑数据</WideButton>
      <WideButton>清除默认风格</WideButton>
    </PanelSection>
  </Panel>
);

export default function App() {
  return (
    <Screen>
      <GlobalStyle />
      <BrowserChrome />
      <SiteHeader />
      <Page>
        <PageHead>
          <PageTitle>在线网络拓扑图</PageTitle>
          <OutlineButton>
            <Line w={16} stroke="none" fill="currentColor">
              <path d="M1 1H6L4.5 2.5L7 5L5 7L2.5 4.5L1 6ZM15 1V6L13.5 4.5L11 7L9 5L11.5 2.5L10 1ZM1 15V10L2.5 11.5L5 9L7 11L4.5 13.5L6 15ZM15 15H10L11.5 13.5L9 11L11 9L13.5 11.5L15 10Z" />
            </Line>
            全屏
          </OutlineButton>
          <OutlineButton>
            <Line w={14} h={16} stroke="none" fill="currentColor">
              <path d="M5 0H9V5H12.5L7 11L1.5 5H5ZM0 10H4L7 13L10 10H14V15H0Z" />
            </Line>
            代码
          </OutlineButton>
        </PageHead>
        <Editor>
          <EditorHead>
            <LogoSlot>
              <Line w={40} h={34} stroke="#2196d6" strokeWidth="3">
                <path d="M12 8H28M9 13L17 23" />
                <rect x="1.5" y="3" width="9.5" height="9" />
                <rect x="29" y="3" width="9.5" height="9" />
                <rect x="15" y="23" width="9.5" height="9" />
              </Line>
            </LogoSlot>
            <FileInfo>
              <FileLine>
                <FileName>cisco_1.xml</FileName>
                <SavedNote>
                  <Line w={12} strokeWidth="1"><circle cx="6" cy="6" r="5.4" /><path d="M3.5 6L5.5 8L9 4" /></Line>
                  最近保存 15:45
                </SavedNote>
              </FileLine>
              <MenuBar>
                {["文件", "编辑", "查看", "调整图形", "其它", "帮助"].map((t) => (
                  <MenuItem key={t}>{t}</MenuItem>
                ))}
              </MenuBar>
            </FileInfo>
            <HeadCorner>
              <PlainButton aria-label="语言"><Globe /></PlainButton>
              <UserButton aria-label="用户">
                <Line w={14} stroke="none" fill="#000">
                  <path d="M7 0C9.5 0 10.5 1.8 10.2 4C10 5.8 9 7 8.8 8C9.5 9.3 14 9.5 14 14H0C0 9.5 4.5 9.3 5.2 8C5 7 4 5.8 3.8 4C3.5 1.8 4.5 0 7 0Z" />
                </Line>
              </UserButton>
            </HeadCorner>
          </EditorHead>
          <Toolbar />
          <Workspace>
            <Palette />
            <Splitter><Grip /></Splitter>
            <Drawing />
            <FormatPanel />
          </Workspace>
        </Editor>
        <Intro>工具简介</Intro>
      </Page>
    </Screen>
  );
}
